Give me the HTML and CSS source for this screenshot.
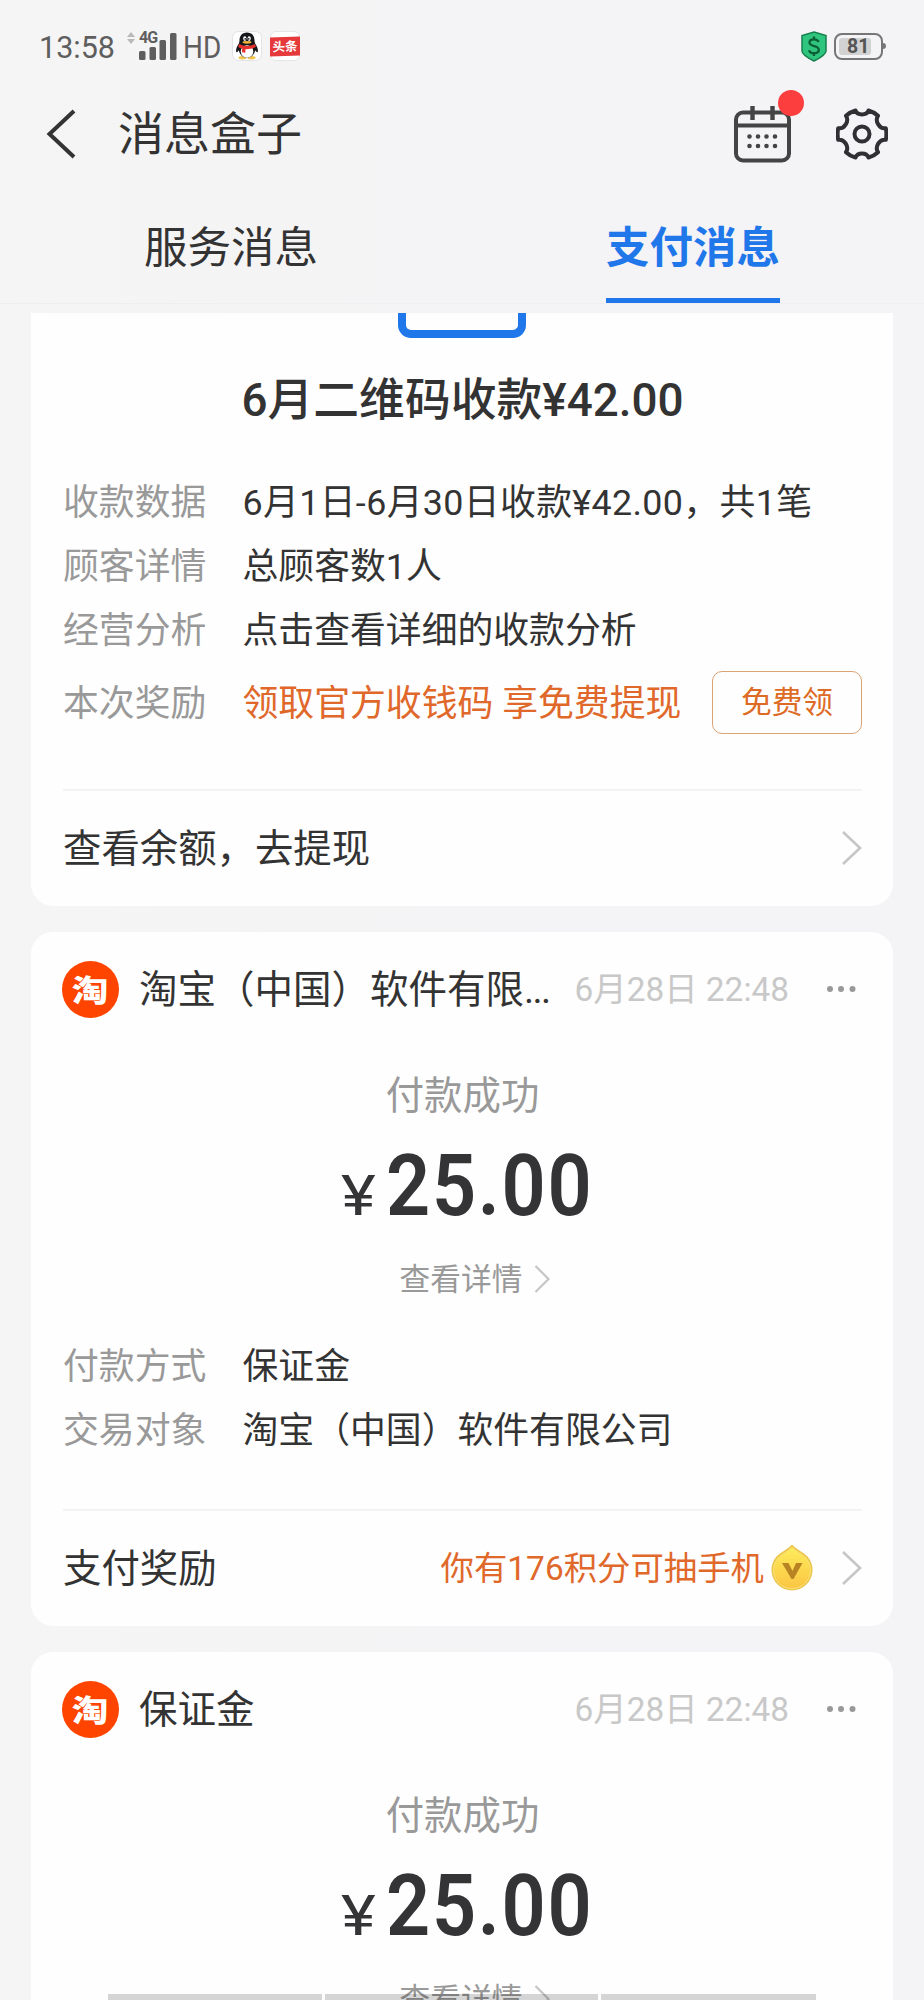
FILE: index.html
```html
<!DOCTYPE html>
<html lang="zh-CN">
<head>
<meta charset="utf-8">
<title>消息盒子</title>
<link rel="stylesheet" href="styles.css">
</head>
<body>
<div class="screen">
  <div class="status">
    <span class="clock">13:58</span>
    <svg class="updown" viewBox="0 0 8 12"><path d="M4 0l4 5H0zM4 12l4-5H0z" fill="#b9b9b9"/></svg>
    <div class="signal">
      <svg viewBox="0 0 38 27"><g fill="#5e5e5e"><rect x="0" y="18" width="6.500" height="9" rx="1.500"/><rect x="10.500" y="14" width="6.500" height="13" rx="1.500"/><rect x="20.500" y="7" width="6.500" height="20" rx="1.500"/><rect x="31" y="0" width="6.500" height="27" rx="1.500"/></g></svg>
      <span class="net">4G</span>
    </div>
    <span class="hd">HD</span>
    <svg class="app qq" viewBox="0 0 30 30">
      <rect x=".5" y=".5" width="29" height="29" rx="6" fill="#fff" stroke="#e3e3e3"/>
      <ellipse cx="10.500" cy="26.700" rx="4" ry="1.700" fill="#f3c44c"/><ellipse cx="19.500" cy="26.700" rx="4" ry="1.700" fill="#f3c44c"/>
      <path d="M15 1.500c-5 0-7.500 3.600-7.500 7.700 0 1.300-.2 2.300-.6 3.300C5 15.500 3.500 18.500 4.300 21c.6.7 1.800-.6 2.500-1.700.8 4.400 4.200 7.500 8.200 7.500s7.400-3.100 8.200-7.500c.7 1.100 1.900 2.400 2.500 1.700.8-2.500-.7-5.500-2.600-8.500-.4-1-.6-2-.6-3.300 0-4.100-2.500-7.700-7.500-7.700z" fill="#15181b"/>
      <ellipse cx="15" cy="20.500" rx="6.300" ry="6.200" fill="#fff"/>
      <ellipse cx="12.800" cy="7.600" rx="1.600" ry="2.300" fill="#fff"/><ellipse cx="17.200" cy="7.600" rx="1.600" ry="2.300" fill="#fff"/>
      <circle cx="13.200" cy="7.900" r=".8"/><circle cx="16.800" cy="7.900" r=".8"/>
      <ellipse cx="15" cy="11.300" rx="4.500" ry="1.400" fill="#f2b23a"/>
      <path d="M7 13c5 2.600 11 2.600 16 0l.8 3c-3 1.500-6.500 2.200-10.300 2.200l-.2 3.500-3.300-.5.200-3.700c-1.300-.3-2.600-.8-4-1.500z" fill="#e5322d"/>
    </svg>
    <div class="app news"><span>头条</span></div>
    <svg class="shield" viewBox="0 0 26 31">
      <path d="M13 1L25 4.500V20c0 3-6 7-12 10C7 27 1 23 1 20V4.500z" fill="#2fc57e" stroke="#16804d" stroke-width="1.500"/>
      <path d="M17.500 11c-.5-2-2.300-2.700-4.500-2.700-2.500 0-4.500 1.100-4.500 3.300 0 4.700 9.300 2.300 9.300 7.100 0 2.300-2.100 3.500-4.800 3.500-2.600 0-4.500-1-4.900-3M13 5.500v3M13 22v3" fill="none" stroke="#0c5e35" stroke-width="2.300"/>
    </svg>
    <div class="battery"><span class="level">81</span><i class="nub"></i></div>
  </div>

  <div class="navbar">
    <svg class="back" viewBox="0 0 30 50"><path d="M28 2L3.500 25 28 48" fill="none" stroke="#333" stroke-width="4"/></svg>
    <h1>消息盒子</h1>
    <div class="cal">
      <svg viewBox="0 0 57 58" fill="none" stroke="#444">
        <rect x="2" y="7.500" width="53" height="48" rx="7" stroke-width="4"/>
        <path d="M2 20.500h53" stroke-width="3.800"/><path d="M18.500 1v14M38.500 1v14" stroke-width="4.400"/>
        <path d="M15.500 31.500h26M15.500 41h26" stroke-width="4.600" stroke-linecap="round" stroke-dasharray="0 8.500"/>
      </svg>
      <i class="badge"></i>
    </div>
    <svg class="gear" viewBox="0 0 52 52" fill="none" stroke="#303034" stroke-width="4" stroke-linejoin="round">
      <circle cx="26" cy="26" r="7.500"/>
      <path d="M19.500 2.500C21.500 7.700 30.500 7.700 32.500 2.500Q38 4 42 7.800C38.500 13 43.500 21.300 49.800 20.200Q51 26 49.800 31.800C43.500 30.700 38.500 39 42 44.200Q38 48 32.500 49.500C30.500 44.300 21.500 44.300 19.500 49.500Q14 48 10 44.200C13.500 39 8.500 30.700 2.200 31.800Q1 26 2.200 20.200C8.500 21.300 13.500 13 10 7.800Q14 4 19.500 2.500Z"/>
    </svg>
  </div>

  <div class="tabs">
    <div class="tab"><span>服务消息</span></div>
    <div class="tab active"><span>支付消息</span></div>
  </div>

  <div class="feed">
    <section class="card first">
      <div class="qr-edge"></div>
      <h2>6月二维码收款¥42.00</h2>
      <dl class="rows">
        <div><dt>收款数据</dt><dd class="spaced">6月1日-6月30日收款¥42.00，共1笔</dd></div>
        <div><dt>顾客详情</dt><dd>总顾客数1人</dd></div>
        <div><dt>经营分析</dt><dd>点击查看详细的收款分析</dd></div>
        <div class="reward"><dt>本次奖励</dt><dd class="orange">领取官方收钱码 享免费提现</dd><button class="claim">免费领</button></div>
      </dl>
      <div class="foot"><span>查看余额，去提现</span><svg class="chev" viewBox="0 0 21 36"><path d="M2 2l17 16L2 34" fill="none" stroke="#c6c6c8" stroke-width="2.600"/></svg></div>
    </section>

    <section class="card">
      <header><span class="logo"><b>淘</b></span><span class="name">淘宝（中国）软件有限<span class="dotted">...</span></span><time>6月28日 22:48</time><svg class="dots" viewBox="0 0 30 8"><g fill="#999"><circle cx="4" cy="4" r="3"/><circle cx="15" cy="4" r="3"/><circle cx="26.500" cy="4" r="3"/></g></svg></header>
      <p class="state">付款成功</p>
      <p class="amount"><span class="yen">¥</span><span class="sum">25.00</span></p>
      <p class="detail">查看详情<svg viewBox="0 0 17 30"><path d="M1.500 2l13 13-13 13" fill="none" stroke="#c6c6c8" stroke-width="2.200"/></svg></p>
      <dl class="rows">
        <div><dt>付款方式</dt><dd>保证金</dd></div>
        <div><dt>交易对象</dt><dd>淘宝（中国）软件有限公司</dd></div>
      </dl>
      <div class="foot"><span>支付奖励</span><span class="points">你有176积分可抽手机</span>
        <svg class="coin" viewBox="0 0 42 47"><defs><linearGradient id="g" x1="0" y1="0" x2="0" y2="1"><stop offset="0" stop-color="#fdec5a"/><stop offset="1" stop-color="#fbc544"/></linearGradient></defs>
          <path d="M21 .5C25 5 32 8 36.500 12.500a20.500 20.500 0 1 1-31 0C10 8 17 5 21 .5z" fill="#edc64d"/>
          <path d="M21 3.500C25 7.500 31 10 35 14a18.500 18.500 0 1 1-28 0C11 10 17 7.500 21 3.500z" fill="url(#g)" stroke="#f9e278"/>
          <path d="M11 19h6.500l4 8 3.500-8h6.500L22.500 35h-2z" fill="#b88423"/></svg>
        <svg class="chev" viewBox="0 0 21 36"><path d="M2 2l17 16L2 34" fill="none" stroke="#c6c6c8" stroke-width="2.600"/></svg></div>
    </section>

    <section class="card">
      <header><span class="logo"><b>淘</b></span><span class="name">保证金</span><time>6月28日 22:48</time><svg class="dots" viewBox="0 0 30 8"><g fill="#999"><circle cx="4" cy="4" r="3"/><circle cx="15" cy="4" r="3"/><circle cx="26.500" cy="4" r="3"/></g></svg></header>
      <p class="state">付款成功</p>
      <p class="amount"><span class="yen">¥</span><span class="sum">25.00</span></p>
      <p class="detail">查看详情<svg viewBox="0 0 17 30"><path d="M1.500 2l13 13-13 13" fill="none" stroke="#c6c6c8" stroke-width="2.200"/></svg></p>
    </section>
  </div>
  <div class="bottom"><i></i><i></i><i></i></div>
</div>
</body>
</html>
```

FILE: styles.css
```css
* { box-sizing: border-box; margin: 0; padding: 0; }
body { width: 924px; height: 2000px; overflow: hidden; }
.screen {
  position: relative; width: 924px; height: 2000px; overflow: hidden;
  background: linear-gradient(90deg, #f5f5f5, #f4f3f5 60%, #f4f3f6);
  font-family: Roboto, "Noto Sans CJK SC", sans-serif; color: #333;
}
svg { display: block; flex: none; }
i { display: block; }

.status { height: 92px; padding: 0 37px 0 39px; display: flex; align-items: center; color: #5e5e5e; }
.clock { font-size: 30.5px; line-height: 36px; margin-top: 4px; }
.updown { width: 8px; height: 12px; margin: -16px 0 0 12px; }
.signal { position: relative; margin-left: 4px; }
.signal svg { width: 38px; height: 27px; }
.net { position: absolute; left: 0; top: -3px; font: 700 16px/16px Roboto, sans-serif; letter-spacing: -1px; }
.hd { width: 37px; font-size: 31px; line-height: 36px; margin: 3px 0 0 6px; transform: scaleX(.9); transform-origin: left; }
.app { width: 30px; height: 30px; flex: none; }
.qq { margin-left: 12px; }
.news { margin-left: 8px; background: #fff; border: 1px solid #e6e6e6; border-radius: 6px; display: flex; align-items: center; }
.news span {
  flex: none; width: 30px; height: 19px; margin-left: -1px; background: #e5393c; color: #fff; transform: skewY(-2deg);
  font: 700 12.5px/18px "Noto Sans CJK SC", sans-serif; text-align: center;
}
.shield { width: 26px; height: 31px; margin-left: auto; }
.battery {
  position: relative; width: 49px; height: 27px; margin-left: 7px; padding: 3px;
  border: 2px solid #767676; border-radius: 8px; display: flex; margin-right: 4px;
}
.level {
  width: 32px; height: 17px; padding-left: 8px; border-radius: 3px; background: #d2d2d2;
  font: 700 19.5px/18px Roboto, sans-serif; color: #555;
}
.nub { position: absolute; right: -5px; top: 8px; width: 3px; height: 6px; border-radius: 0 3px 3px 0; background: #767676; }

.navbar { height: 83px; padding: 0 36px 0 46px; display: flex; align-items: center; }
.back { width: 30px; height: 50px; }
h1 { margin: 1px 0 0 42px; font-size: 46px; line-height: 60px; font-weight: 400; }
.cal { position: relative; margin: 0 45px 0 auto; }
.cal svg { width: 57px; height: 58px; }
.badge { position: absolute; left: 44px; top: -15px; width: 26px; height: 26px; border-radius: 50%; background: #fd3e3e; }
.gear { width: 52px; height: 52px; }

.tabs { height: 129px; display: flex; border-bottom: 1px solid #efeef0; }
.tab { flex: 1; display: flex; justify-content: center; }
.tab span { padding-top: 44px; height: 128px; font-size: 43.5px; line-height: 60px; border-bottom: 5px solid transparent; }
.tab.active span { color: #1f77ea; font-weight: 700; border-color: #1f77ea; }

.feed { padding: 9px 31px 0; display: flex; flex-direction: column; gap: 26px; }
.card { height: 694px; padding: 0 31px 0 32px; border-radius: 22px; background: #fefefe; display: flex; flex-direction: column; }
.card.first { height: 593px; border-radius: 0 0 22px 22px; }
.card:last-child { height: 380px; }
.qr-edge { width: 128px; height: 25px; flex: none; align-self: center; margin-right: 1px; border: 8px solid #1f77ea; border-top: 0; border-radius: 0 0 13px 13px; }
h2 { margin-top: 33px; text-align: center; font-size: 45.8px; line-height: 60px; font-weight: 500; }
.first .rows { margin-top: 40px; }
.rows > div { height: 64px; display: flex; align-items: center; font-size: 35.85px; line-height: 50px; white-space: nowrap; }
.rows dt { width: 179.5px; color: #999; }
.rows .spaced { letter-spacing: .36px; }
.rows .reward { height: 81px; }
.orange, .points { color: #e0682a; }
.claim {
  margin: -2px 0 0 auto; width: 150px; height: 63px; border: 1.5px solid #dba273; border-radius: 10px;
  background: none; color: #dd6b25; font: 30.700px/50px Roboto, "Noto Sans CJK SC", sans-serif;
}
.foot {
  margin-top: auto; height: 117px; flex: none; border-top: 2px solid #f3f3f3;
  display: flex; align-items: center; font-size: 38.4px; line-height: 50px;
}
.foot > span { padding-top: 1px; }
.chev { width: 21px; height: 36px; margin-left: auto; margin-top: -1px; }
.points { margin-left: auto; font-size: 33.4px; }
.coin { width: 42px; height: 47px; margin: -2px 0 0 7px; }
.coin + .chev { margin-left: 28px; }

header { height: 115px; display: flex; align-items: center; }
.logo {
  width: 57px; height: 57px; flex: none; margin: -1px 0 0 -1px; border-radius: 50%; background: #ff4400; color: #fff;
  font: 32px/55px "Noto Sans CJK SC", sans-serif; text-align: center;
}
.logo b { display: inline-block; font-weight: 900; transform: scale(1.14, .94); }
.name { margin-left: 20px; font-size: 38.5px; line-height: 50px; white-space: nowrap; }
.dotted { letter-spacing: -1.6px; }
time { margin: 1px 0 0 auto; font-size: 33.4px; line-height: 50px; color: #c8c8c8; white-space: nowrap; }
.dots { width: 30px; height: 8px; margin: -1px 6px 0 37px; }
.state { margin-top: 24px; text-align: center; font-size: 38.4px; line-height: 50px; color: #999; }
.amount {
  margin-top: 15px; padding-left: 281px; height: 100px; display: flex; align-items: baseline;
  line-height: 100px; color: #343336;
}
.yen { margin-right: 13px; font-size: 55px; line-height: 60px; transform: scaleX(1.2); }
.sum { font-size: 85.5px; font-weight: 600; letter-spacing: 1.9px; transform: scaleX(.905); transform-origin: left; }
.detail { margin: 19px 0 0 26px; display: flex; justify-content: center; align-items: center; gap: 12px; font-size: 30.700px; line-height: 50px; color: #999; }
.detail svg { width: 17px; height: 30px; margin-top: -2px; }
.detail + .rows { margin-top: 30px; }

.bottom { position: absolute; left: 108px; top: 1994px; width: 708px; height: 6px; display: grid; grid-template-columns: 214px 273px 215px; gap: 3px; }
.bottom i { background: rgba(0, 0, 0, .16); }
```
